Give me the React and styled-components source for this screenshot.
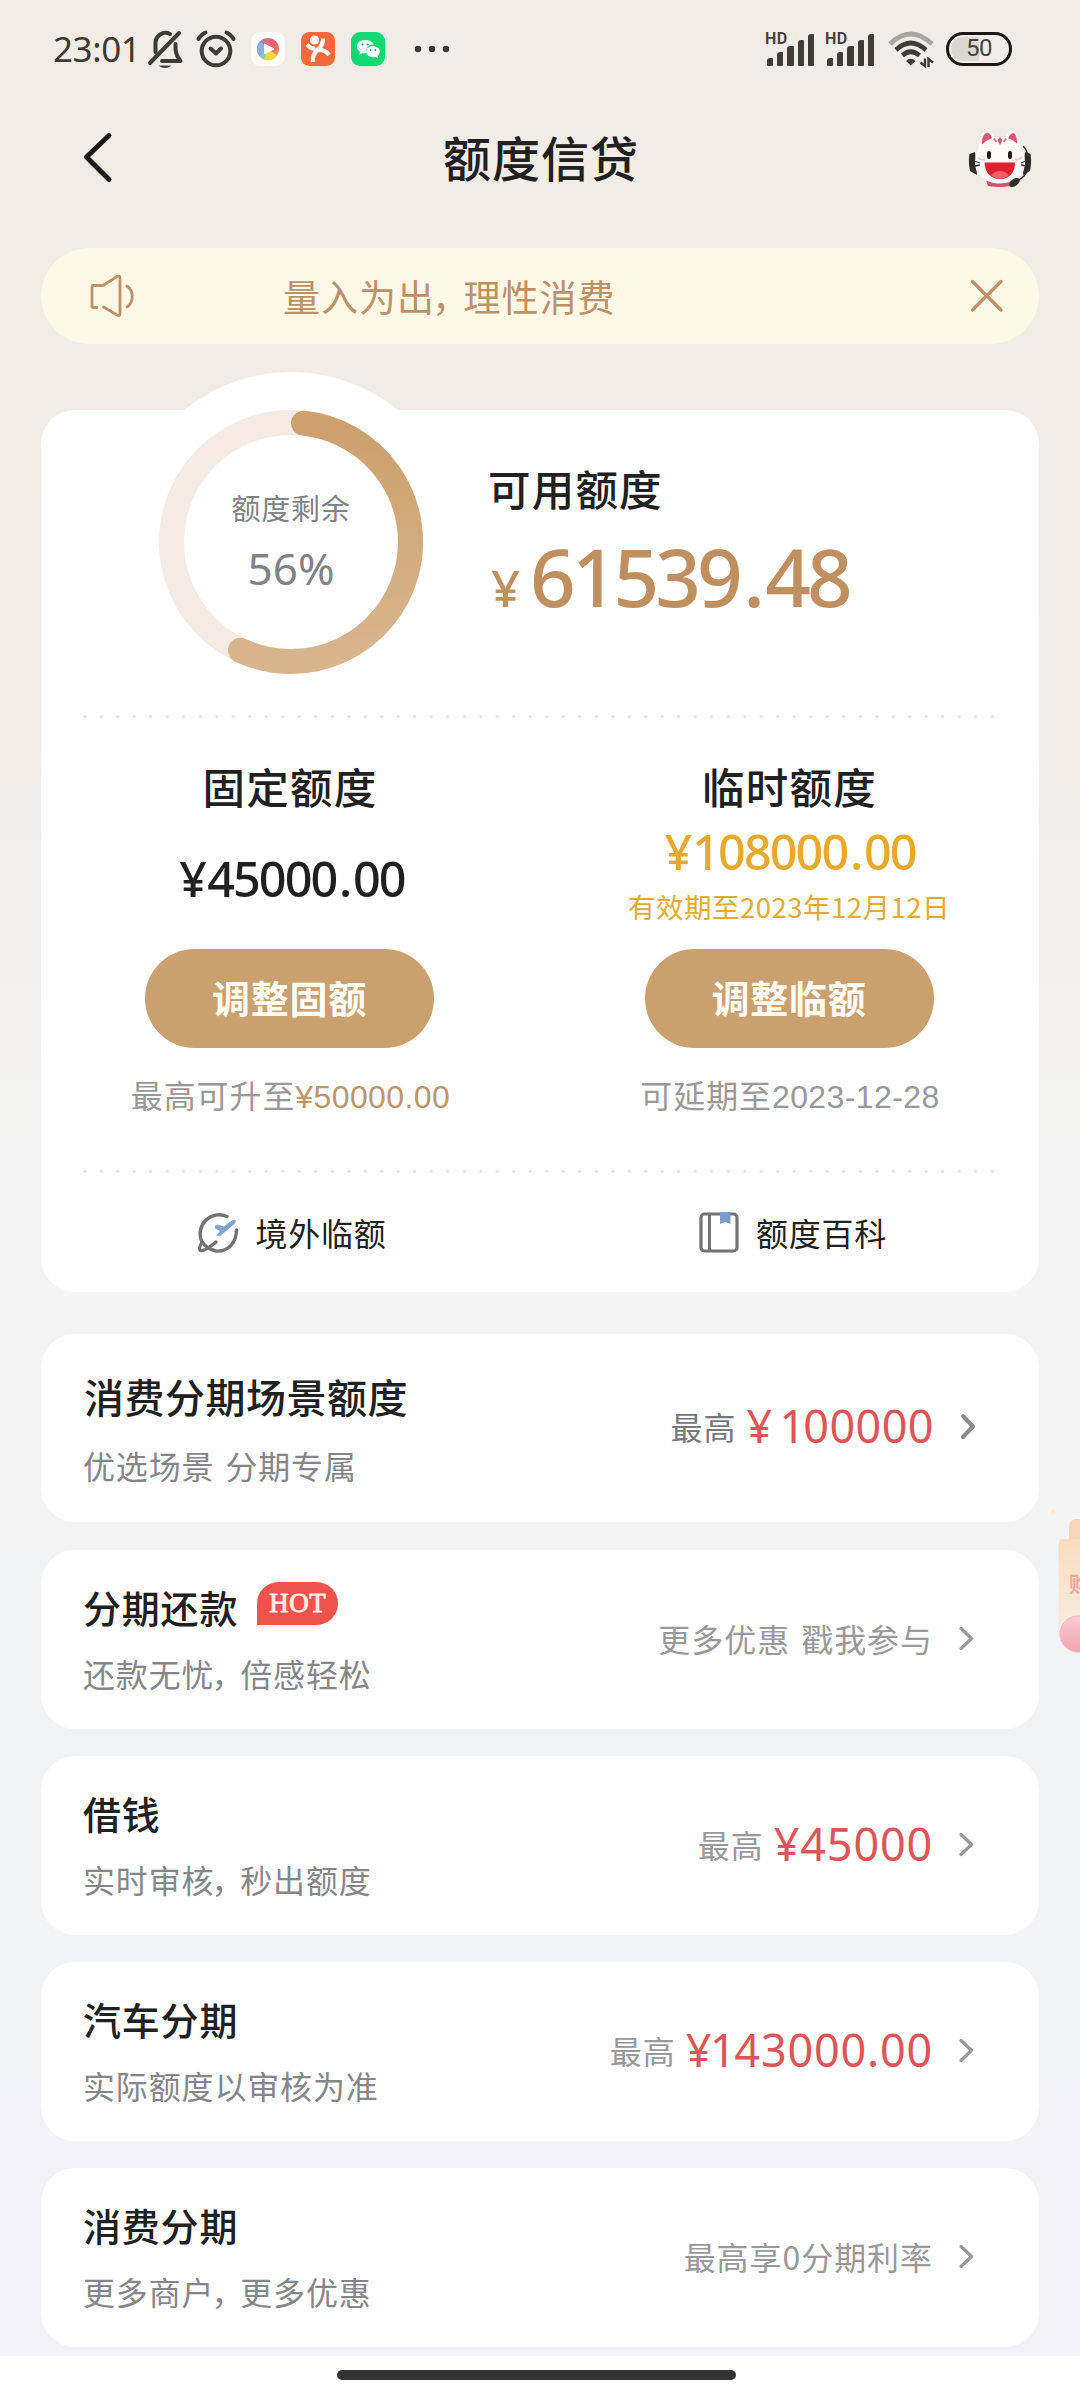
import React from "react";
import styled, { createGlobalStyle } from "styled-components";

const CJK = `"Noto Sans CJK SC", "Noto Sans", sans-serif`;
const NUM = `"Noto Sans", "Noto Sans CJK SC", sans-serif`;

const GlobalStyle = createGlobalStyle`
  html, body { margin: 0; padding: 0; }
  * { box-sizing: border-box; }
  button { border: 0; padding: 0; background: none; font: inherit; }
`;

const Screen = styled.div`
  position: relative;
  width: 1080px;
  height: 2400px;
  overflow: hidden;
  display: flex;
  flex-direction: column;
  font-family: ${CJK};
  color: #202020;
  background: linear-gradient(
    180deg,
    #f1ece5 0,
    #f1ece6 380px,
    #f2ede9 760px,
    #f3f2f1 1010px,
    #f4f4f4 1200px,
    #f4f4f4 1548px,
    #f2f3f7 1556px,
    #f2f2f8 2400px
  );
`;

/* ---------- status bar ---------- */

const StatusBar = styled.header`
  height: 98px;
  padding: 0 68px 0 53px;
  display: flex;
  justify-content: space-between;
  align-items: center;
`;

const StatusGroup = styled.div`
  display: flex;
  align-items: center;
`;

const Clock = styled.span`
  width: 95px;
  font: 400 35px/40px ${NUM};
  letter-spacing: -0.4px;
  color: #3d3935;
  white-space: nowrap;
`;

const StatusIcon = styled.svg`
  display: block;
  flex: none;
  width: ${(p) => p.$w}px;
  height: ${(p) => p.$h || p.$w}px;
  margin-left: ${(p) => p.$ml || 0}px;
  overflow: visible;
`;

const Signal = styled.div`
  position: relative;
  width: 52px;
  height: 34px;
  margin-right: 8px;
  display: flex;
  justify-content: flex-end;
  align-items: flex-end;
  gap: 4px;
  padding-right: 2px;
`;

const SignalBar = styled.i`
  width: 6.2px;
  height: ${(p) => p.$h}px;
  border-radius: 3px 1px 1px 1px;
  background: #403c38;
`;

const HdLabel = styled.span`
  position: absolute;
  left: 1px;
  top: 1px;
  font: 600 16px/12px Roboto, sans-serif;
  letter-spacing: 0.3px;
  color: #403c38;
`;

const Battery = styled.div`
  width: 66px;
  height: 34px;
  margin-left: 12px;
  border: 3.5px solid #1a1714;
  border-radius: 17px;
  padding: 2px;
  display: flex;
`;

const BatteryFill = styled.div`
  width: 100%;
  border-radius: 12px;
  background: linear-gradient(90deg, #d9d8d2 50%, transparent 50%);
  font: 400 24px/23px Roboto, sans-serif;
  letter-spacing: -0.4px;
  text-align: center;
  color: #45423e;
`;

/* ---------- nav bar ---------- */

const NavBar = styled.nav`
  height: 120px;
  padding: 0 48px 0 83px;
  display: grid;
  grid-template-columns: 64px 1fr 64px;
  align-items: center;
`;

const PageTitle = styled.h1`
  margin: 0;
  padding: 0 33px 5px 0;
  font-size: 48px;
  line-height: 60px;
  font-weight: 500;
  letter-spacing: 1px;
  text-align: center;
`;

const NavIcon = styled.svg`
  display: block;
  width: 64px;
  height: 60px;
  overflow: visible;
`;

/* ---------- notice ---------- */

const Content = styled.main`
  flex: 1;
  padding: 30px 41px 0;
`;

const Notice = styled.section`
  height: 96px;
  border-radius: 48px;
  padding: 0 36px 0 48px;
  background: #fef8e7;
  display: flex;
  align-items: center;
`;

const NoticeText = styled.p`
  margin: 0 auto 0 148px;
  font-size: 37px;
  line-height: 50px;
  letter-spacing: 1px;
  color: #bd9165;
  white-space: nowrap;
`;

const Comma = styled.span`
  margin-left: -3px;
  letter-spacing: ${(p) => p.$tight}px;
`;

/* ---------- amounts ---------- */

const One = styled.span`
  margin: 0 -0.05em;
`;

const Point = styled.span`
  margin: 0 0.055em;
`;

/* ---------- credit card ---------- */

const CreditCard = styled.section`
  position: relative;
  height: 882px;
  margin-top: 66px;
  border-radius: 34px;
  background: #fff;
`;

const Summary = styled.div`
  height: 305px;
  display: flex;
`;

const RingWrap = styled.div`
  position: relative;
  width: 340px;
  height: 340px;
  margin: -38px 0 0 80px;
  border-radius: 50%;
  background: #fff;
  display: flex;
  flex-direction: column;
  align-items: center;
`;

const RingSvg = styled.svg`
  position: absolute;
  left: 0;
  top: 0;
  width: 340px;
  height: 340px;
`;

const RingLabel = styled.span`
  margin-top: 115px;
  font-size: 29px;
  line-height: 40px;
  letter-spacing: 0.8px;
  color: #808285;
`;

const RingValue = styled.span`
  margin-top: 18px;
  font: 400 44px/46px ${NUM};
  letter-spacing: 0;
  color: #808285;
`;

const Available = styled.div`
  padding: 50px 0 0 26px;
`;

const Heading = styled.h2`
  margin: 0;
  padding-left: 1px;
  font-size: 42.5px;
  line-height: 56px;
  font-weight: 500;
  letter-spacing: 1.2px;
  white-space: nowrap;
`;

const BigAmount = styled.div`
  margin-top: 18px;
  display: flex;
  align-items: baseline;
  font: 500 80px/84px ${NUM};
  letter-spacing: -4px;
  color: #c08f5f;
`;

const BigYen = styled.span`
  width: 43px;
  padding-left: 4px;
  font-size: 51px;
  letter-spacing: 0;
  font-weight: 500;
`;

const Dotted = styled.div`
  height: 3px;
  margin: 0 40px 0 42px;
  background: radial-gradient(circle at 1.8px 1.5px, #e6e6e6 1.3px, transparent 1.9px) 0 0 / 16.5px 3px repeat-x;
`;

const LimitGrid = styled.div`
  height: 452px;
  display: grid;
  grid-template-columns: 497px 502px;
  padding-top: 40px;
`;

const Limit = styled.div`
  display: flex;
  flex-direction: column;
  align-items: center;
`;

const LimitValues = styled.div`
  height: 135px;
  display: flex;
  flex-direction: column;
  align-items: center;
`;

const LimitAmount = styled.div`
  margin-top: ${(p) => (p.$temp ? 12 : 39)}px;
  padding-left: ${(p) => (p.$temp ? 2 : 5)}px;
  font: 500 48.5px/50px ${NUM};
  letter-spacing: -1.9px;
  color: ${(p) => (p.$temp ? "#e7a92c" : "#202020")};
  white-space: nowrap;
`;

const Yen = styled.span`
  margin-right: ${(p) => p.$gap}px;
`;

const ValidUntil = styled.div`
  margin-top: 15px;
  font: 400 27.5px/30px ${CJK};
  letter-spacing: 0.5px;
  color: #e3aa33;
  white-space: nowrap;
`;

const AdjustButton = styled.button`
  width: 289px;
  height: 99px;
  border-radius: 50px;
  background: #cba06f;
  color: #fffdf8;
  font-size: 38px;
  font-weight: 700;
  line-height: 94px;
  letter-spacing: 0.8px;
  padding-bottom: 4px;
`;

const LimitHint = styled.p`
  margin: 25px 0 0;
  padding-left: 2px;
  font-size: 32px;
  line-height: 42px;
  letter-spacing: 0.9px;
  color: #999;
  white-space: nowrap;
`;

const HintNumber = styled.span`
  font-family: "Liberation Sans", Arial, sans-serif;
  letter-spacing: 0.4px;
  color: ${(p) => (p.$gold ? "#c19468" : "inherit")};
`;

const Links = styled.div`
  height: 118px;
  display: grid;
  grid-template-columns: 502px 499px;
  align-items: center;
`;

const LinkItem = styled.a`
  display: flex;
  align-items: center;
  justify-content: center;
  gap: 16px;
  font-size: 32px;
  line-height: 44px;
  letter-spacing: 0.8px;
`;

const LinkIcon = styled.svg`
  display: block;
  width: 42px;
  height: 42px;
`;

/* ---------- product rows ---------- */

const Products = styled.div`
  margin-top: 42px;
  display: flex;
  flex-direction: column;
  gap: 27px;
`;

const Row = styled.article`
  height: ${(p) => (p.$large ? 188 : 179)}px;
  margin-bottom: ${(p) => (p.$large ? 1 : 0)}px;
  padding: ${(p) => (p.$large ? "34px 62px 0 43px" : "30px 65px 0 42px")};
  border-radius: 34px;
  background: #fff;
  display: flex;
  justify-content: space-between;
`;

const RowTitle = styled.h3`
  margin: 0;
  height: ${(p) => (p.$large ? 56 : 54)}px;
  display: flex;
  font-size: ${(p) => (p.$large ? 40 : 38)}px;
  line-height: ${(p) => (p.$large ? 56 : 54)}px;
  font-weight: 500;
  letter-spacing: ${(p) => (p.$large ? 0.5 : 0.8)}px;
  white-space: nowrap;
`;

const RowDesc = styled.p`
  margin: ${(p) => (p.$large ? "20px 0 0 -1px" : "18px 0 0")};
  font-size: 32px;
  line-height: 42px;
  letter-spacing: 0.85px;
  word-spacing: 3px;
  color: #85868b;
  white-space: nowrap;
`;

const HotBadge = styled.span`
  width: 81px;
  height: 43px;
  margin: 2px 0 0 19px;
  border-radius: 22px 22px 22px 0;
  background: #f0524d;
  color: #ffece4;
  font: 400 27px/43px "Liberation Serif", serif;
  -webkit-text-stroke: 0.9px #ffece4;
  letter-spacing: 0.5px;
  text-align: center;
`;

const RowSide = styled.div`
  height: 56px;
  margin-top: 31px;
  display: flex;
  align-items: center;
`;

const SideText = styled.span`
  padding-bottom: 3px;
  font-size: 32px;
  line-height: 44px;
  letter-spacing: 0.95px;
  word-spacing: 3px;
  color: ${(p) => (p.$dark ? "#77787d" : "#999")};
  white-space: nowrap;
`;

const SideAmount = styled.span`
  margin-left: 10px;
  padding-bottom: 2px;
  font: 400 45px/50px ${NUM};
  letter-spacing: ${(p) => (p.$large ? 0.4 : 0.8)}px;
  color: #dc5558;
  white-space: nowrap;
`;

const Chevron = styled.svg`
  display: block;
  width: ${(p) => (p.$large ? 18 : 16)}px;
  height: 30px;
  margin-left: 25px;
`;

/* ---------- overlays ---------- */

const Sticker = styled.svg`
  position: absolute;
  right: 0;
  top: 1470px;
  width: 50px;
  height: 190px;
`;

const StickerText = styled.span`
  position: absolute;
  left: 1069px;
  top: 1570px;
  width: 11px;
  overflow: hidden;
  font-size: 22px;
  line-height: 24px;
  font-weight: 700;
  color: #f4a894;
  white-space: nowrap;
`;

const HomeArea = styled.footer`
  height: 44px;
  background: #fff;
  display: flex;
  justify-content: center;
  padding: 14px 7px 0 0;
`;

const HomeBar = styled.div`
  width: 399px;
  height: 10px;
  border-radius: 5px;
  background: #333;
`;

const products = [
  { title: "消费分期场景额度", desc: "优选场景 分期专属", side: "最高", amount: "100000", large: true },
  { title: "分期还款", desc: "还款无忧\uff0c倍感轻松", side: "更多优惠 戳我参与", hot: true },
  { title: "借钱", desc: "实时审核\uff0c秒出额度", side: "最高", amount: "45000" },
  { title: "汽车分期", desc: "实际额度以审核为准", side: "最高", amount: "143000.00" },
  { title: "消费分期", desc: "更多商户\uff0c更多优惠", side: "最高享0分期利率" },
];

function WithComma({ text, tight }) {
  const [before, after] = text.split("\uff0c");
  if (after === undefined) return text;
  return (
    <>
      {before}
      <Comma $tight={tight}>{"\uff0c"}</Comma>
      {after}
    </>
  );
}

/* Compact amounts draw "1" closer to its neighbours. */
function CompactDigits({ value }) {
  return value.split(/(1)/).map((part, i) => (part === "1" ? <One key={i}>1</One> : part));
}

/* Headline amounts leave air around the decimal point. */
function AiryDigits({ value }) {
  const [whole, cents] = value.split(".");
  return (
    <>
      {whole}
      <Point>.</Point>
      {cents}
    </>
  );
}

function SignalMeter() {
  return (
    <Signal>
      <HdLabel>HD</HdLabel>
      {[8, 14, 20, 26, 32].map((h) => (
        <SignalBar key={h} $h={h} />
      ))}
    </Signal>
  );
}

function ring(deg, r = 119.5, c = 170) {
  const a = ((deg - 90) * Math.PI) / 180;
  return `${c + r * Math.cos(a)} ${c + r * Math.sin(a)}`;
}

function ProgressRing() {
  return (
    <RingSvg viewBox="0 0 340 340">
      <defs>
        <linearGradient id="gold" x1="0" y1="0" x2="0" y2="1">
          <stop offset="0" stopColor="#cda06d" />
          <stop offset="1" stopColor="#d9b58e" />
        </linearGradient>
      </defs>
      <circle cx="170" cy="170" r="119.5" fill="none" stroke="#f4ebe3" strokeWidth="25" />
      <path
        d={`M${ring(6)} A119.5 119.5 0 1 1 ${ring(205)}`}
        fill="none"
        stroke="url(#gold)"
        strokeWidth="25"
        strokeLinecap="round"
      />
    </RingSvg>
  );
}

function StatusIcons() {
  return (
    <>
      <StatusIcon $w={35} $h={39} viewBox="0 0 35 39" fill="none" stroke="#3f3b37" strokeWidth="4" strokeLinecap="round" strokeLinejoin="round">
        <path d="M2 33 L31 3" />
        <path d="M7.500 22 V13 A10 10 0 0 1 22 4" />
        <path d="M27.500 14 V19 C28 24 30 28 32.500 31 H14" />
        <path d="M11 35.500 H23 A6.500 4 0 0 1 11 35.500 Z" fill="#3f3b37" stroke="none" />
      </StatusIcon>
      <StatusIcon $w={40} $h={38} $ml={13} viewBox="0 0 40 38" fill="none" stroke="#3f3b37" strokeWidth="4" strokeLinecap="round" strokeLinejoin="round">
        <circle cx="20" cy="21" r="14.300" />
        <path d="M14.500 18.500 L20 23.500 L25 18.500" />
        <path d="M2.500 9 Q5 4.500 9.500 2.500 M30.500 2.500 Q35 4.500 37.500 9" />
      </StatusIcon>
      <StatusIcon $w={34} $ml={15} viewBox="0 0 34 34">
        <defs>
          <linearGradient id="playA" x1="0" y1="0" x2="1" y2="1">
            <stop offset="0" stopColor="#b57fb8" />
            <stop offset="0.5" stopColor="#e8606c" />
            <stop offset="1" stopColor="#f2a04b" />
          </linearGradient>
        </defs>
        <rect width="34" height="34" rx="9" fill="#fdfbfb" />
        <circle cx="17" cy="17" r="11" fill="url(#playA)" />
        <path d="M17 17 L9.500 9 A11 11 0 0 0 8.500 24 Z" fill="#7eb4e8" />
        <path d="M17 17 L8.500 24 A11 11 0 0 0 14 27.600 Z" fill="#7fd0b0" />
        <path d="M17 17 L13 27.300 A11 11 0 0 0 26 23.300 Z" fill="#f1d93c" />
        <path d="M13.500 12 L23 17 L13.500 22 Z" fill="#fff" stroke="#fff" strokeLinejoin="round" />
      </StatusIcon>
      <StatusIcon $w={34} $ml={16} viewBox="0 0 34 34">
        <rect width="34" height="34" rx="8.500" fill="#f7683a" />
        <circle cx="13.500" cy="8" r="4.600" fill="#fff" />
        <path d="M6 12.500 Q10 17.500 14.500 16.500 M22 6.500 Q22 13 17.500 17 Q11 22 12 30 M17 18 Q24 17.500 28 23" fill="none" stroke="#fff" strokeWidth="4.300" />
      </StatusIcon>
      <StatusIcon $w={34} $ml={16} viewBox="0 0 34 34">
        <rect width="34" height="34" rx="9" fill="#12d874" />
        <path d="M14 8 C9 8 6 11 6 14.500 C6 17 7.300 18.700 9 19.800 L8.500 22.500 L11.500 21 C13 21.400 14.500 21.300 15.500 21 C14 16 18 12 22.500 12.500 C21.500 10 18.500 8 14 8 Z" fill="#fff" />
        <path d="M22 14 C17.800 14 15.200 16.600 15.200 19.700 C15.200 22.800 18 25.200 22 25.200 L24.500 24.900 L27 26.200 L26.600 23.800 C28 22.700 28.800 21.300 28.800 19.700 C28.800 16.600 26 14 22 14 Z" fill="#fff" />
        <g fill="#12a85e">
          <circle cx="11.500" cy="12.500" r="1" />
          <circle cx="16.500" cy="12.500" r="1" />
          <circle cx="19.700" cy="18" r="0.900" />
          <circle cx="24.300" cy="18" r="0.900" />
        </g>
      </StatusIcon>
      <StatusIcon $w={34} $h={8} $ml={30} viewBox="0 0 34 8" fill="#3a3632">
        <circle cx="3" cy="4" r="3.200" />
        <circle cx="17" cy="4" r="3.200" />
        <circle cx="31" cy="4" r="3.200" />
      </StatusIcon>
    </>
  );
}

function WifiIcon() {
  return (
    <StatusIcon $w={46} $h={34} $ml={4} viewBox="0 0 46 34" fill="none">
      <path d="M2 12 Q22.500 -8 44 12" stroke="#aaa69f" strokeWidth="4.600" />
      <path d="M8 18 Q22.500 4 38 18" stroke="#403c38" strokeWidth="4.600" />
      <path d="M14.500 23.500 Q22.500 16 31.500 23.500" stroke="#403c38" strokeWidth="4.600" />
      <path d="M18 29 Q22.500 24.500 27.500 29 L22.800 33.500 Z" fill="#403c38" />
      <path d="M37 26.500 V34 L32.500 30.500 M40.500 35 V27 L45 30.500" stroke="#403c38" strokeWidth="2.400" />
    </StatusIcon>
  );
}

function CatIcon() {
  return (
    <NavIcon viewBox="0 0 64 60">
      <path d="M10 22 C11 8 15 3 20 3 C24 3 26 7 28 9 H37 C39 5 42 2 45 3 C50 4 52 12 53 22 Z" fill="#fffaf8" />
      <path d="M14 15 C14 8 17 5 19 5 C22 5 24 8 24 11 C20 12 17 14 14 17 Z" fill="#d9566d" />
      <path d="M40 11 C41 7 44 5 45.500 5 C48 6 49.500 11 49 17 C46 14 43 12 40 11 Z" fill="#d9566d" />
      <path d="M7 24 L1.500 26 Q0 34 2 43 L9 47 Z M57 24 L62.500 26 Q64 34 62 43 L55 47 Z" fill="#302d2d" />
      <path d="M18 52 Q32 57 45 52 L42 58 Q31 60 20 58 Z" fill="#d65068" />
      <path d="M32 9 C46 9 57 20 57 35 C57 47 46 55.500 32 55.500 C18 55.500 7 47 7 35 C7 20 18 9 32 9 Z" fill="#fffafa" />
      <path d="M26 10.500 L28.500 14 M38 10.500 L35.500 14" stroke="#d67c83" strokeWidth="2" />
      <path d="M32 9 L34.500 12 L32 17 L29.500 12 Z" fill="#c9606c" />
      <rect x="19" y="23" width="4" height="8" rx="2" fill="#241d20" />
      <rect x="40" y="23" width="4" height="8" rx="2" fill="#241d20" />
      <path d="M16.500 34.500 H47 C47 45 41 51 32 51 C22 51 17 44 16.500 34.500 Z" fill="#dd1f2e" />
      <path d="M23 47 Q32 39 41 47 Q37 51 32 51 Q27 51 23 47 Z" fill="#f06064" />
      <path d="M10 30 Q14 33 17 31 M47 31 Q50 33 54 29" stroke="#f8bfc6" strokeWidth="1.600" fill="none" />
      <path d="M6 33 L12 35 M7 38 L12 37 M53 35 L58 33 M53 37 L58 38 M55 18 Q59 22 60 28 M60 40 Q58 49 49 53" stroke="#302d2d" strokeWidth="1.300" fill="none" />
      <ellipse cx="46.500" cy="54.500" rx="6" ry="3.500" transform="rotate(-38 46.500 54.500)" fill="#302d2d" />
    </NavIcon>
  );
}

export default function App() {
  return (
    <Screen>
      <GlobalStyle />
      <StatusBar>
        <StatusGroup>
          <Clock>23:01</Clock>
          <StatusIcons />
        </StatusGroup>
        <StatusGroup>
          <SignalMeter />
          <SignalMeter />
          <WifiIcon />
          <Battery>
            <BatteryFill>50</BatteryFill>
          </Battery>
        </StatusGroup>
      </StatusBar>

      <NavBar>
        <NavIcon viewBox="0 0 64 60">
          <path d="M26 7.500 L3.500 29 L26 51.500" fill="none" stroke="#1d1a1a" strokeWidth="5" strokeLinecap="round" strokeLinejoin="round" />
        </NavIcon>
        <PageTitle>额度信贷</PageTitle>
        <CatIcon />
      </NavBar>

      <Content>
        <Notice>
          <StatusIcon $w={46} $h={44} viewBox="0 0 46 44" fill="none" stroke="#bd9165" strokeWidth="2.800" strokeLinecap="round" strokeLinejoin="round">
            <path d="M8 33.500 H4 Q3 33.500 3 32.500 V12.500 Q3 11.500 4 11.500 H14 L28 2.500 Q31 1.500 31 4 V40 Q31 42.500 28 41 L14.500 33" />
            <path d="M38 12 C45 17 45 28 38 33" />
          </StatusIcon>
          <NoticeText>
            <WithComma text={"量入为出\uff0c理性消费"} tight={-5.5} />
          </NoticeText>
          <StatusIcon $w={32} viewBox="0 0 32 32" fill="none" stroke="#bd9165" strokeWidth="3.200" strokeLinecap="round">
            <path d="M1.500 1.500 L30 30 M30 1.500 L1.500 30" />
          </StatusIcon>
        </Notice>

        <CreditCard>
          <Summary>
            <RingWrap>
              <ProgressRing />
              <RingLabel>额度剩余</RingLabel>
              <RingValue>56%</RingValue>
            </RingWrap>
            <Available>
              <Heading>可用额度</Heading>
              <BigAmount>
                <BigYen>¥</BigYen>
                <span>
                  <AiryDigits value="61539.48" />
                </span>
              </BigAmount>
            </Available>
          </Summary>
          <Dotted />
          <LimitGrid>
            <Limit>
              <Heading>固定额度</Heading>
              <LimitValues>
                <LimitAmount>
                  <Yen $gap={2}>¥</Yen>
                  <AiryDigits value="45000.00" />
                </LimitAmount>
              </LimitValues>
              <AdjustButton>调整固额</AdjustButton>
              <LimitHint>
                最高可升至<HintNumber $gold>¥50000.00</HintNumber>
              </LimitHint>
            </Limit>
            <Limit>
              <Heading>临时额度</Heading>
              <LimitValues>
                <LimitAmount $temp>
                  <Yen $gap={2}>¥</Yen>
                  <AiryDigits value="108000.00" />
                </LimitAmount>
                <ValidUntil>有效期至2023年12月12日</ValidUntil>
              </LimitValues>
              <AdjustButton>调整临额</AdjustButton>
              <LimitHint>
                可延期至<HintNumber>2023-12-28</HintNumber>
              </LimitHint>
            </Limit>
          </LimitGrid>
          <Dotted />
          <Links>
            <LinkItem>
              <LinkIcon viewBox="0 0 42 42" fill="none">
                <path d="M30 5.500 A19 19 0 0 0 5 31 Q1 38 3.500 39.500 Q7 41 19 31" stroke="#737373" strokeWidth="3.400" strokeLinecap="round" />
                <path d="M5 31 Q10 38 19 40 Q27 41 34 34.500 Q39.500 28 39.500 19" stroke="#737373" strokeWidth="3.400" strokeLinecap="round" />
                <path d="M18 15 L20 13.500 L27 15.500 L34 10 Q38 7.500 39 10 Q38 13 35 15 L28 21 L23 25 L19.500 24.500 L23 20 L18 17.500 Z" fill="#7fa3d3" />
              </LinkIcon>
              境外临额
            </LinkItem>
            <LinkItem>
              <LinkIcon viewBox="0 0 42 42" fill="none">
                <rect x="3" y="3" width="36" height="37" rx="3.500" stroke="#737373" strokeWidth="3.200" />
                <path d="M11.500 3 V40" stroke="#737373" strokeWidth="3" />
                <path d="M22 1 H32.500 V13 L27.200 11 L22 13 Z" fill="#7c9fca" />
              </LinkIcon>
              额度百科
            </LinkItem>
          </Links>
        </CreditCard>

        <Products>
          {products.map((p) => (
            <Row key={p.title} $large={p.large}>
              <div>
                <RowTitle $large={p.large}>
                  {p.title}
                  {p.hot && <HotBadge>HOT</HotBadge>}
                </RowTitle>
                <RowDesc $large={p.large}>
                  <WithComma text={p.desc} tight={-3.2} />
                </RowDesc>
              </div>
              <RowSide $large={p.large}>
                <SideText $dark={p.large}>{p.side}</SideText>
                {p.amount && (
                  <SideAmount $large={p.large}>
                    <Yen $gap={p.large ? 9 : 0}>¥</Yen>
                    <CompactDigits value={p.amount} />
                  </SideAmount>
                )}
                <Chevron $large={p.large} viewBox={p.large ? "0 0 18 30" : "0 0 16 30"} fill="none" stroke={p.large ? "#8a8a8c" : "#98989a"} strokeWidth={p.large ? 4 : 3.2} strokeLinecap="round" strokeLinejoin="round">
                  <path d={p.large ? "M4 4 L14 14.500 L4 25" : "M3 4.500 L13.500 14.500 L3 24.500"} />
                </Chevron>
              </RowSide>
            </Row>
          ))}
        </Products>
      </Content>

      <Sticker viewBox="0 0 50 190">
        <defs>
          <linearGradient id="stickerBody" x1="0" y1="0" x2="0" y2="1">
            <stop offset="0" stopColor="#f9dcc0" />
            <stop offset="1" stopColor="#f8ebe0" />
          </linearGradient>
          <linearGradient id="stickerPill" x1="0" y1="0" x2="0" y2="1">
            <stop offset="0" stopColor="#f9ccd0" />
            <stop offset="1" stopColor="#f4a3af" />
          </linearGradient>
        </defs>
        <rect x="39" y="49" width="30" height="40" rx="7" fill="#f7d7b8" />
        <rect x="28.500" y="69" width="50" height="90" rx="5" fill="url(#stickerBody)" />
        <rect x="30" y="146" width="60" height="36" rx="18" fill="url(#stickerPill)" stroke="#f3b7bb" strokeWidth="1" />
        <path d="M8 29 L16 32 L11 34 Z" fill="#fbf6dc" />
        <path d="M20 42 L24 38 L26 42 L22 46 Z" fill="#f9ecd2" />
        <path d="M44 16 L47 14 L48 18 Z" fill="#f8f3e4" />
      </Sticker>
      <StickerText>购</StickerText>

      <HomeArea>
        <HomeBar />
      </HomeArea>
    </Screen>
  );
}
